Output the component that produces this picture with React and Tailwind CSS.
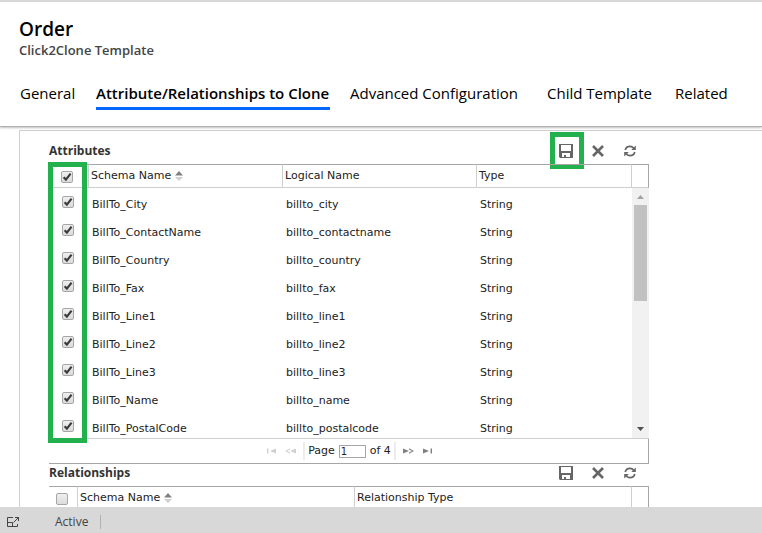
import React from "react";

const attributes = [
  ["BillTo_City", "billto_city"],
  ["BillTo_ContactName", "billto_contactname"],
  ["BillTo_Country", "billto_country"],
  ["BillTo_Fax", "billto_fax"],
  ["BillTo_Line1", "billto_line1"],
  ["BillTo_Line2", "billto_line2"],
  ["BillTo_Line3", "billto_line3"],
  ["BillTo_Name", "billto_name"],
  ["BillTo_PostalCode", "billto_postalcode"],
];

function Check({ label, checked }) {
  return (
    <span className="grid size-3">
      <input
        type="checkbox"
        aria-label={label}
        defaultChecked={checked}
        className="peer col-start-1 row-start-1 size-3 appearance-none rounded-xs border border-[#a6a6a6] bg-linear-to-b from-[#efefef] to-[#dcdcdc]"
      />
      <svg
        viewBox="0 0 12 12"
        className="pointer-events-none invisible col-start-1 row-start-1 size-3 peer-checked:visible"
        fill="none"
        stroke="#3c3c3c"
        strokeWidth="2.2"
      >
        <path d="M2.6 6.2 L4.9 8.6 L9.6 2.6" />
      </svg>
    </span>
  );
}

function SortArrows() {
  return (
    <svg viewBox="0 0 8 10" className="h-2.5 w-2" aria-hidden="true">
      <path d="M4 0 L8 4.5 H0 Z" fill="#808080" />
      <path d="M0 6 H8 L4 10 Z" fill="#cfcfcf" />
    </svg>
  );
}

function SaveIcon() {
  return (
    <svg viewBox="0 0 14 14" className="size-3.5" aria-hidden="true">
      <path
        fillRule="evenodd"
        fill="#666"
        d="M0 0 H14 V14 H1 L0 13 Z M2 1 V7 H12 V1 Z M3 9 V13 H5 V11 H7 V13 H11 V9 Z"
      />
    </svg>
  );
}

function CloseIcon() {
  return (
    <svg viewBox="0 0 12 12" className="size-3" fill="none" stroke="#666" strokeWidth="2.6" aria-hidden="true">
      <path d="M1 1 L11 11 M11 1 L1 11" />
    </svg>
  );
}

function RefreshIcon() {
  return (
    <svg viewBox="0 0 12 12" className="size-3" aria-hidden="true">
      <g fill="none" stroke="#666" strokeWidth="1.7">
        <path d="M1.2 5 C1.8 2.6 3.8 1.3 6 1.3 C7.6 1.3 8.8 2 9.8 3.2" />
        <path d="M10.8 7 C10.2 9.4 8.2 10.7 6 10.7 C4.4 10.7 3.2 10 2.2 8.8" />
      </g>
      <path d="M11.8 0.4 V5 H7.2 Z M0.2 11.6 V7 H4.8 Z" fill="#666" />
    </svg>
  );
}

function SectionBar({ title, highlight, className }) {
  return (
    <div className={"flex items-center justify-between pr-3 " + className}>
      <h2 className="font-['Open_Sans','Noto_Sans',sans-serif] text-[12px] leading-4 font-bold text-[#333]">{title}</h2>
      <div className="flex items-center gap-[18px]">
        <button type="button" aria-label="Save" className="relative flex size-3.5 items-center justify-center">
          <SaveIcon />
          {highlight && (
            <span className="pointer-events-none absolute -top-3 -left-[9px] h-[37px] w-[34px] border-5 border-[#22b14c]" />
          )}
        </button>
        <button type="button" aria-label="Delete" className="flex size-3.5 items-center justify-center">
          <CloseIcon />
        </button>
        <button type="button" aria-label="Refresh" className="flex size-3.5 items-center justify-center">
          <RefreshIcon />
        </button>
      </div>
    </div>
  );
}

function Head({ children }) {
  return (
    <th scope="col" className="border-l border-[#cfcfcf] pt-1 pl-[2px] text-left align-top font-normal">
      <span className="flex items-center gap-1">{children}</span>
    </th>
  );
}

function ScrollBar() {
  return (
    <div className="flex h-[250px] flex-col items-center bg-[#f1f1f1]" aria-hidden="true">
      <svg viewBox="0 0 17 17" className="size-[17px] shrink-0">
        <path d="M5 11 L8.5 7 L12 11 Z" fill="#a3a3a3" />
      </svg>
      <div className="h-24 w-[13px] bg-[#c1c1c1]" />
      <svg viewBox="0 0 17 17" className="mt-auto size-[17px] shrink-0">
        <path d="M5 6 H12 L8.5 10 Z" fill="#505050" />
      </svg>
    </div>
  );
}

function PageButton({ label, enabled, children }) {
  return (
    <button
      type="button"
      aria-label={label}
      disabled={!enabled}
      className={enabled ? "text-[#808080]" : "text-[#d0d0d0]"}
    >
      <svg viewBox="0 0 11 6" className="h-1.5 w-[11px]" fill="currentColor" aria-hidden="true">
        {children}
      </svg>
    </button>
  );
}

function Pager() {
  return (
    <div className="flex h-6 items-center justify-center border-r border-[#a6a6a6] pl-0.5">
      <div className="flex items-center gap-2">
        <PageButton label="First page">
          <path d="M1 0.5 H2.4 V5.5 H1 Z M10 0.5 V5.5 L4 3 Z" />
        </PageButton>
        <PageButton label="Previous page">
          <path d="M11 0.5 V5.5 L5 3 Z M5 0.2 V1.4 L2 3 L5 4.6 V5.8 L0 3 Z" />
        </PageButton>
      </div>
      <div className="mx-[7px] flex h-[18px] items-center gap-1 border-x-2 border-[#ececec] px-[3px]">
        <label htmlFor="page">Page</label>
        <input
          id="page"
          defaultValue="1"
          className="h-[13px] w-[27px] border border-[#a6a6a6] pl-px text-[10px] leading-none"
        />
        <span>of 4</span>
      </div>
      <div className="flex items-center gap-2">
        <PageButton label="Next page" enabled>
          <path d="M0 0.5 V5.5 L6 3 Z M6 0.2 V1.4 L9 3 L6 4.6 V5.8 L11 3 Z" />
        </PageButton>
        <PageButton label="Last page" enabled>
          <path d="M8.6 0.5 H10 V5.5 H8.6 Z M1 0.5 V5.5 L7 3 Z" />
        </PageButton>
      </div>
    </div>
  );
}

function AttributesGrid() {
  return (
    <div className="relative">
      <table className="w-full table-fixed border-separate border-spacing-0">
        <colgroup>
          <col className="w-[39px]" />
          <col className="w-[194px]" />
          <col className="w-[194px]" />
          <col />
          <col className="w-[18px]" />
        </colgroup>
        <thead>
          <tr className="h-6 [&>*]:border-t [&>*]:border-b [&>*]:border-t-[#a6a6a6] [&>*]:border-b-[#cfcfcf]">
            <th className="pt-1.5 pl-3 align-top">
              <Check label="Select all attributes" checked />
            </th>
            <Head>
              Schema Name <SortArrows />
            </Head>
            <Head>Logical Name</Head>
            <Head>Type</Head>
            <td className="border-x border-r-[#a6a6a6] border-l-[#cfcfcf]" />
          </tr>
        </thead>
        <tbody>
          {attributes.map(([schema, logical], i) => (
            <tr key={schema} className="h-7 last:h-[26px] [&>td]:p-0 [&>td]:align-top">
              <td>
                <div className="pt-2 pl-[13px]">
                  <Check label={schema} checked />
                </div>
              </td>
              <td>
                <div className="pt-2.5 pl-1">{schema}</div>
              </td>
              <td>
                <div className="pt-2.5 pl-1">{logical}</div>
              </td>
              <td>
                <div className="pt-2.5 pl-1">String</div>
              </td>
              {i === 0 && (
                <td rowSpan={attributes.length}>
                  <div className="pl-px">
                    <ScrollBar />
                  </div>
                </td>
              )}
            </tr>
          ))}
        </tbody>
      </table>
      <div className="pointer-events-none absolute -top-0.5 -bottom-[5px] -left-px w-[39px] border-5 border-[#22b14c]" />
    </div>
  );
}

function RelationshipsGrid() {
  return (
    <table className="w-full table-fixed border-separate border-spacing-0">
      <colgroup>
        <col className="w-7" />
        <col />
        <col />
        <col className="w-[18px]" />
      </colgroup>
      <thead>
        <tr className="h-6 [&>*]:border-t [&>*]:border-t-[#a6a6a6]">
          <th className="pt-1.5 pl-[7px] align-top">
            <Check label="Select all relationships" />
          </th>
          <Head>
            Schema Name <SortArrows />
          </Head>
          <Head>Relationship Type</Head>
          <td className="border-x border-r-[#a6a6a6] border-l-[#cfcfcf]" />
        </tr>
      </thead>
    </table>
  );
}

const tabs = [
  ["General", "min-w-14 border-transparent"],
  ["Attribute/Relationships to Clone", "min-w-[234px] border-[#0266ff] font-semibold"],
  ["Advanced Configuration", "min-w-[177px] border-transparent"],
  ["Child Template", "min-w-[108px] border-transparent"],
  ["Related", "border-transparent"],
];

export default function App() {
  return (
    <div className="flex h-screen flex-col overflow-hidden border-t-2 border-[#d8d8d8] bg-white font-['Open_Sans','Noto_Sans',sans-serif] text-black">
      <header className="shrink-0 border-b border-[#b0b0b0] pt-3.5 pl-[19px] shadow-[0_1px_2px_rgba(0,0,0,0.25)]">
        <h1 className="text-[19px] leading-[26px] font-semibold">Order</h1>
        <p className="text-[13px] leading-4 font-semibold text-[#444]">Click2Clone Template</p>
        <nav className="mt-5 flex h-[48px] items-start gap-5 pl-px text-[15px] leading-[30px] whitespace-nowrap">
          {tabs.map(([tab, style]) => (
            <a key={tab} href="#" className={"h-8 border-b-3 " + style}>
              {tab}
            </a>
          ))}
        </nav>
      </header>

      <main className="mt-[3px] ml-[19px] min-h-0 flex-1 overflow-hidden border-t border-l border-[#cfcfcf] pl-[29px] font-['DejaVu_Sans',sans-serif] text-[11px] leading-[14px] text-[#222]">
        <div className="w-[600px] max-w-full">
          <SectionBar title="Attributes" highlight className="h-[33px] pt-1.5" />
          <AttributesGrid />
          <div className="border-y border-t-[#cfcfcf] border-b-[#a6a6a6]">
            <Pager />
          </div>
          <SectionBar title="Relationships" className="h-[22px] pb-1" />
          <RelationshipsGrid />
        </div>
      </main>

      <footer className="flex h-[26px] shrink-0 items-center bg-[#d8d8d8] pt-1 pl-1.5 text-[12px] text-[#444]">
        <button type="button" aria-label="Open in new window">
          <svg viewBox="0 0 14 12" className="h-3 w-3.5" fill="none" stroke="#444" aria-hidden="true">
            <path d="M7 1.5 H1.5 V6.5 M1.5 4 V10.5 H11.5 V8 M1.5 6.5 H6.5 V10.5 M7.5 6.5 L13 1 M9 1.5 H12.5 V5" />
          </svg>
        </button>
        <span className="ml-[35px] border-r border-[#b0b0b0] pr-3 leading-[14px]">Active</span>
      </footer>
    </div>
  );
}
